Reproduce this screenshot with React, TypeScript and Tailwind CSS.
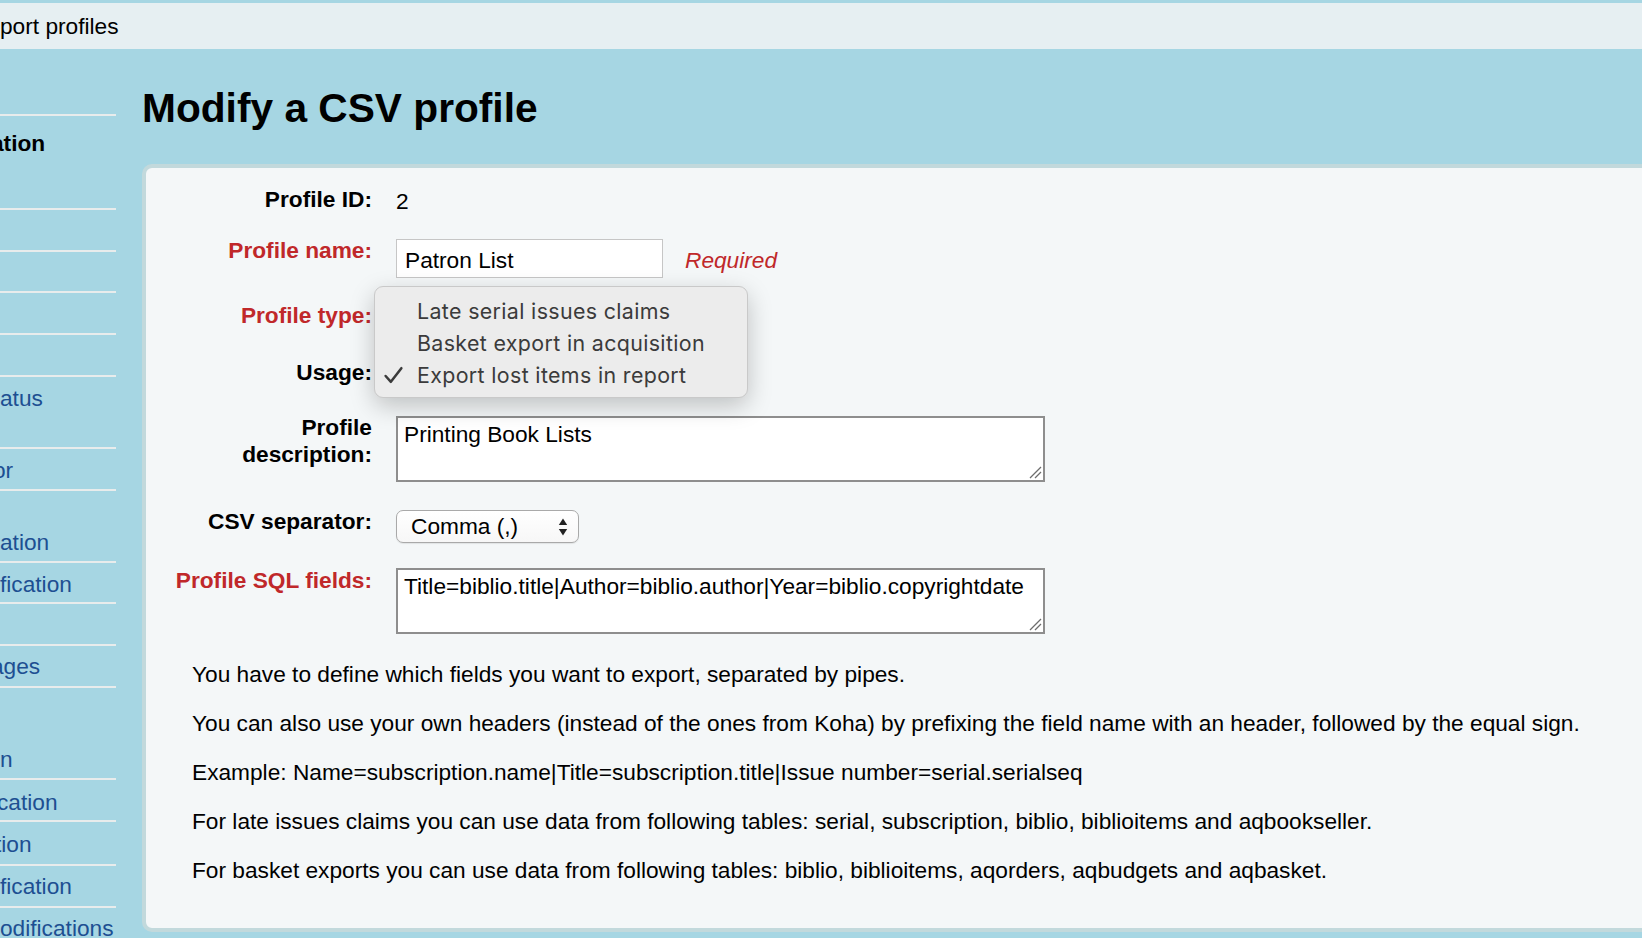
import React from "react";

const sideItems = [
  { h: "h-[67px]", t: "", pt: "pt-0" },
  { h: "h-[94px]", t: "ation", pt: "pt-[12px]", bold: true, ml: "-ml-[9px]" },
  { h: "h-[42px]", t: "", pt: "pt-0" },
  { h: "h-[41px]", t: "", pt: "pt-0" },
  { h: "h-[42px]", t: "", pt: "pt-0" },
  { h: "h-[42px]", t: "", pt: "pt-0" },
  { h: "h-[72px]", t: "atus", pt: "pt-[6px]" },
  { h: "h-[42px]", t: "or", pt: "pt-[6px]", ml: "-ml-[7px]" },
  { h: "h-[72px]", t: "ation", pt: "pt-[36px]" },
  { h: "h-[41px]", t: "fication", pt: "pt-[6px]" },
  { h: "h-[42px]", t: "", pt: "pt-0" },
  { h: "h-[42px]", t: "ages", pt: "pt-[5px]", ml: "-ml-[9px]" },
  { h: "h-[92px]", t: "n", pt: "pt-[56px]" },
  { h: "h-[42px]", t: "cation", pt: "pt-[7px]", ml: "-ml-[3px]" },
  { h: "h-[44px]", t: "tion", pt: "pt-[7px]", ml: "-ml-[5px]" },
  { h: "h-[42px]", t: "fication", pt: "pt-[5px]" },
  { h: "h-[40px]", t: "odifications", pt: "pt-[5px]", last: true },
];

const Sidebar = () => (
  <div className="w-[116px] shrink-0 flex flex-col overflow-hidden">
    {sideItems.map((s, i) => (
      <div
        key={i}
        className={`${s.h} ${s.pt} shrink-0 whitespace-nowrap leading-[30px] ${s.last ? "" : "border-b-2 border-[#e8ecec]"}`}
      >
        {s.t && (
          <div className={`${s.ml ?? ""} ${s.bold ? "font-bold text-black" : "text-[#1d4f92]"}`}>{s.t}</div>
        )}
      </div>
    ))}
  </div>
);

const Label = ({ children, red }: { children: React.ReactNode; red?: boolean }) => (
  <div className={`w-[202px] shrink-0 mr-[24px] text-right font-bold leading-[27px] ${red ? "text-[#c0282a]" : "text-black"}`}>
    {children}
  </div>
);

const SelectArrows = () => (
  <svg width="10" height="22" viewBox="0 0 10 22" className="text-[#222]">
    <path d="M5 2.5 L9.2 9 L0.8 9 Z" fill="currentColor" />
    <path d="M5 19.5 L9.2 13 L0.8 13 Z" fill="currentColor" />
  </svg>
);

const Grip = () => (
  <svg width="14" height="14" viewBox="0 0 14 14" className="absolute right-[3px] bottom-[3px] pointer-events-none">
    <path d="M13 2 L2 13 M13 7 L7 13" stroke="#6d6d6d" strokeWidth="1.3" fill="none" />
  </svg>
);

const Area = ({ value, mt }: { value: string; mt: string }) => (
  <div className={`relative ${mt} w-[649px] h-[66px] shrink-0`}>
    <textarea
      readOnly
      defaultValue={value}
      className="w-full h-full resize-none bg-white border-2 border-[#8e8e8e] px-[6px] pt-[3px] leading-[27px] outline-none overflow-hidden"
    />
    <Grip />
  </div>
);

const PopupMenu = () => (
  <div className="absolute left-[228px] top-[118px] w-[374px] h-[112px] rounded-[9px] bg-[#ececec] border border-[#c9c9c9] shadow-[0_8px_24px_rgba(0,0,0,0.22)] pt-[8px] font-['Inter',sans-serif] text-[21.4px] tracking-[0.35px] text-[#3b3b3b]">
    {["Late serial issues claims", "Basket export in acquisition", "Export lost items in report"].map((t, i) => (
      <div key={t} className="flex items-center h-[32px]">
        <div className="w-[42px] shrink-0 flex justify-start pl-[8px]">
          {i === 2 && (
            <svg width="21" height="21" viewBox="0 0 20 20">
              <path d="M2.5 10.5 L7.5 16 L17.5 3" fill="none" stroke="#3b3b3b" strokeWidth="2.4" strokeLinecap="round" strokeLinejoin="round" />
            </svg>
          )}
        </div>
        <span>{t}</span>
      </div>
    ))}
  </div>
);

const notes = [
  "You have to define which fields you want to export, separated by pipes.",
  "You can also use your own headers (instead of the ones from Koha) by prefixing the field name with an header, followed by the equal sign.",
  "Example: Name=subscription.name|Title=subscription.title|Issue number=serial.serialseq",
  "For late issues claims you can use data from following tables: serial, subscription, biblio, biblioitems and aqbookseller.",
  "For basket exports you can use data from following tables: biblio, biblioitems, aqorders, aqbudgets and aqbasket.",
];

const Panel = () => (
  <div className="relative w-[1600px] h-[768px] shrink-0 bg-[#f4f7f8] border-4 border-[#c2d9dc] rounded-[10px] pt-[18px] pl-[24px]">
    {/* Profile ID */}
    <div className="flex h-[51px]">
      <Label>Profile ID:</Label>
      <div className="leading-[27px] pt-[2px]">2</div>
    </div>

    {/* Profile name */}
    <div className="flex h-[65px]">
      <Label red>Profile name:</Label>
      <div className="flex items-center mt-[2px] h-[39px]">
        <input
          readOnly
          defaultValue="Patron List"
          className="w-[267px] h-[39px] bg-white border border-[#c6c6c6] px-[8px] pt-[4px] outline-none"
        />
        <span className="ml-[22px] pt-[4px] italic text-[#c0282a]">Required</span>
      </div>
    </div>

    <div className="flex h-[57px]">
      <Label red>Profile type:</Label>
    </div>

    <div className="flex h-[55px]">
      <Label>Usage:</Label>
    </div>

    {/* Description */}
    <div className="flex h-[94px]">
      <Label>Profile description:</Label>
      <Area value="Printing Book Lists" mt="mt-[2px]" />
    </div>

    {/* CSV separator */}
    <div className="flex h-[59px]">
      <Label>CSV separator:</Label>
      <div className="mt-[2px] w-[183px] h-[33px] rounded-[7px] border border-[#a9a9a9] bg-gradient-to-b from-white to-[#f7f7f7] flex items-center justify-between pl-[14px] pr-[10px] shadow-[0_1px_1px_rgba(0,0,0,0.08)]">
        <span className="leading-[27px]">Comma (,)</span>
        <SelectArrows />
      </div>
    </div>

    {/* SQL fields */}
    <div className="flex h-[94px]">
      <Label red>Profile SQL fields:</Label>
      <Area value="Title=biblio.title|Author=biblio.author|Year=biblio.copyrightdate" mt="mt-[1px]" />
    </div>

    <div className="ml-[22px] flex flex-col gap-[22px] leading-[27px]">
      {notes.map((n) => (
        <p key={n}>{n}</p>
      ))}
    </div>

    <PopupMenu />
  </div>
);

export default function App() {
  return (
    <div className="w-[1642px] h-[938px] overflow-hidden bg-[#a6d6e3] font-['Liberation_Sans',Arial,sans-serif] text-[22.7px] text-black flex flex-col">
      <div className="h-[3px] shrink-0" />
      <div className="h-[46px] shrink-0 bg-[#e6eff2] flex items-center leading-[27px] whitespace-nowrap">port profiles</div>
      <div className="flex flex-1 min-h-0">
        <Sidebar />
        <main className="ml-[26px] flex flex-col shrink-0">
          <h1 className="h-[115px] shrink-0 pt-[35px] text-[40.7px] leading-[48px] font-bold">Modify a CSV profile</h1>
          <Panel />
        </main>
      </div>
    </div>
  );
}
